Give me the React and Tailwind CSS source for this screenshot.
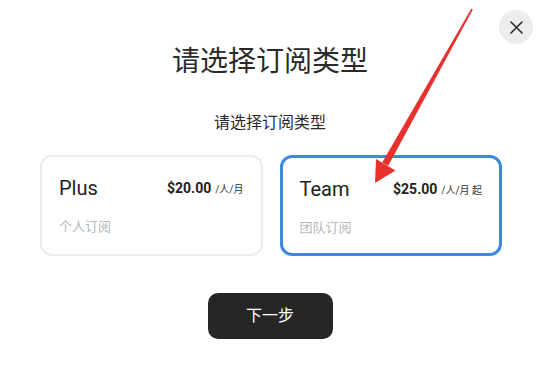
import React from "react";

function Card({ name, price, unit, sub, active }) {
  return (
    <div
      className={
        "h-[101px] rounded-[12px] bg-white px-[17px] pt-[17px] " +
        (active ? "border-[3px] border-[#3d89e0]" : "border-2 border-[#ececec]")
      }
    >
      <div className="flex items-center justify-between">
        <span className="text-[20px] leading-[28px] text-[#222]">{name}</span>
        <span className="flex items-baseline gap-[4px]">
          <span className="text-[14px] font-bold text-[#222]">{price}</span>
          <span className="text-[10px] text-[#333]">{unit}</span>
        </span>
      </div>
      <div className="mt-[16px] text-[13px] leading-[18px] text-[#b3b8be]">{sub}</div>
    </div>
  );
}

export default function App() {
  return (
    <div
      className="relative w-[540px] h-[365px] bg-white overflow-hidden"
      style={{ fontFamily: 'Roboto, "Noto Sans CJK SC", "Noto Sans", sans-serif' }}
    >
      <div className="flex flex-col items-center pt-[44px]">
        <h1 className="text-[28px] leading-[36px] text-[#2a2a2a] font-normal">请选择订阅类型</h1>
        <p className="mt-[33px] text-[16px] leading-[20px] text-[#2a2a2a]">请选择订阅类型</p>
      </div>
      <div className="grid grid-cols-2 gap-[17px] pl-[40px] pr-[38px] mt-[22px]">
        <Card name="Plus" price="$20.00" unit="/人/月" sub="个人订阅" />
        <Card name="Team" price="$25.00" unit="/人/月 起" sub="团队订阅" active />
      </div>
      <div className="flex justify-center mt-[37px]">
        <button className="w-[125px] h-[46px] rounded-[10px] bg-[#262626] text-white text-[16px]">
          下一步
        </button>
      </div>
      <button className="absolute left-[499px] top-[10px] w-[34px] h-[34px] rounded-full bg-[#ededed] flex items-center justify-center">
        <svg width="13" height="13" viewBox="0 0 13 13">
          <path d="M1 1L12 12M12 1L1 12" stroke="#2a2a2a" strokeWidth="1.6" strokeLinecap="round" />
        </svg>
      </button>
      <svg className="absolute left-0 top-0 pointer-events-none" width="540" height="365">
        <polygon points="382.2,162.4 388.2,165.8 472.8,9.6 471.4,8.6" fill="#e8312f" />
        <polygon points="375,183 376,159 395.5,170.5" fill="#e8312f" />
      </svg>
    </div>
  );
}
